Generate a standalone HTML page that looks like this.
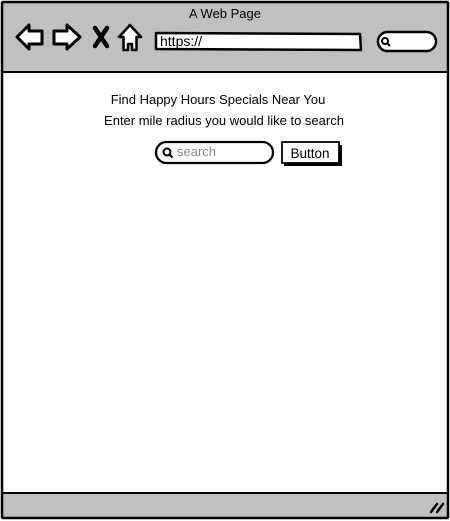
<!DOCTYPE html>
<html><head><style>
html,body{margin:0;padding:0;background:#fff;width:450px;height:521px;overflow:hidden}
svg{display:block}
text{font-family:"Liberation Sans",sans-serif;fill:#000}
</style></head><body>
<svg width="450" height="521" viewBox="0 0 450 521" xmlns="http://www.w3.org/2000/svg">
<rect x="2" y="2" width="446" height="70" fill="#c0c0c0"/>
<rect x="2" y="493" width="446" height="25" fill="#c0c0c0"/>
<rect x="2" y="2" width="446" height="516" fill="none" stroke="#000" stroke-width="2.5" rx="1"/>
<line x1="2" y1="72" x2="448" y2="72" stroke="#000" stroke-width="2"/>
<path d="M2 493 L448 493" stroke="#000" stroke-width="2" fill="none"/>
<text x="225" y="18" font-size="13" text-anchor="middle">A Web Page</text>
<path d="M17 37 L29 25 L29 31 L42 31 L42 44 L29 44 L29 49 Z" fill="#fff" stroke="#000" stroke-width="3" stroke-linejoin="round"/>
<path d="M80 37 L67 25 L67 31 L54 31 L54 44 L67 44 L67 49 Z" fill="#fff" stroke="#000" stroke-width="3" stroke-linejoin="round"/>
<path d="M95 28 L107 46 M107 28 L95 46" stroke="#000" stroke-width="4.5" stroke-linecap="round"/>
<path d="M130 25 L119 37 L123.5 37 L123.5 50 L128 50 L128 44 L132 44 L132 50 L136.5 50 L136.5 37 L141 37 Z" fill="#fff" stroke="#000" stroke-width="2.5" stroke-linejoin="round"/>
<path d="M156 33 L360 34 L361 50 L156 49 Z" fill="#fff" stroke="#000" stroke-width="2.5" stroke-linejoin="round"/>
<text x="160" y="46" font-size="14">https://</text>
<rect x="378" y="32" width="58" height="19" rx="9.5" fill="#fff" stroke="#000" stroke-width="2.5"/>
<circle cx="385" cy="41" r="3" fill="none" stroke="#000" stroke-width="2"/>
<line x1="387" y1="43" x2="390" y2="46" stroke="#000" stroke-width="2"/>
<text x="218" y="104" font-size="13" text-anchor="middle">Find Happy Hours Specials Near You</text>
<text x="224" y="125" font-size="13" text-anchor="middle">Enter mile radius you would like to search</text>
<rect x="156" y="142" width="117" height="21" rx="10.5" fill="#fff" stroke="#000" stroke-width="2.3"/>
<circle cx="167" cy="152" r="3.5" fill="none" stroke="#000" stroke-width="2"/>
<line x1="169.5" y1="154.5" x2="172.5" y2="157.5" stroke="#000" stroke-width="2"/>
<text x="177" y="156" font-size="13" style="fill:#888">search</text>
<rect x="284" y="145" width="58" height="21" fill="#000"/>
<rect x="282" y="142" width="57" height="21" fill="#fff" stroke="#000" stroke-width="1.8"/>
<text x="310" y="158" font-size="13.5" text-anchor="middle">Button</text>
<path d="M431 512 L437 504 M437 512 L443 504" stroke="#000" stroke-width="2.5" stroke-linecap="round"/>
</svg>
</body></html>
